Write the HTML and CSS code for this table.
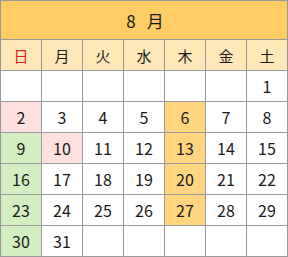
FILE: index.html
```html
<!DOCTYPE html>
<html lang="ja">
<head>
<meta charset="utf-8">
<link rel="stylesheet" href="styles.css">
</head>
<body>
<table class="cal">
  <thead>
    <tr><th class="title" colspan="7"><span class="m">8</span><span class="k">月</span></th></tr>
    <tr class="wd">
      <th class="sun">日</th><th>月</th><th>火</th><th>水</th><th>木</th><th>金</th><th>土</th>
    </tr>
  </thead>
  <tbody>
    <tr><td></td><td></td><td></td><td></td><td></td><td></td><td>1</td></tr>
    <tr><td class="pink">2</td><td>3</td><td>4</td><td>5</td><td class="orange">6</td><td>7</td><td>8</td></tr>
    <tr><td class="green">9</td><td class="pink">10</td><td>11</td><td>12</td><td class="orange">13</td><td>14</td><td>15</td></tr>
    <tr><td class="green">16</td><td>17</td><td>18</td><td>19</td><td class="orange">20</td><td>21</td><td>22</td></tr>
    <tr><td class="green">23</td><td>24</td><td>25</td><td>26</td><td class="orange">27</td><td>28</td><td>29</td></tr>
    <tr><td class="green">30</td><td>31</td><td></td><td></td><td></td><td></td><td></td></tr>
  </tbody>
</table>
</body>
</html>
```
FILE: styles.css
```css
html, body {
  margin: 0;
  padding: 0;
  background: #ffffff;
}
.cal {
  border-collapse: collapse;
  table-layout: fixed;
  font-family: "Noto Sans CJK JP", "Noto Sans", sans-serif;
  color: #1a1a1a;
}
.cal th, .cal td {
  border: 1px solid #999999;
  width: 40px;
  padding: 0;
  text-align: center;
  font-weight: normal;
}
.cal .title {
  height: 38px;
  background: #ffcc66;
  font-size: 17px;
  padding-left: 2px;
}
.cal .title .k {
  margin-left: 11px;
}
.cal .wd th {
  height: 30px;
  background: #ffe8b8;
  font-size: 15px;
}
.cal .wd .sun {
  color: #e02020;
}
.cal td {
  height: 30px;
  font-size: 16px;
  line-height: 1;
}
.cal td.pink { background: #ffe0e0; }
.cal td.green { background: #d3efc2; }
.cal td.orange { background: #ffd580; }
```
